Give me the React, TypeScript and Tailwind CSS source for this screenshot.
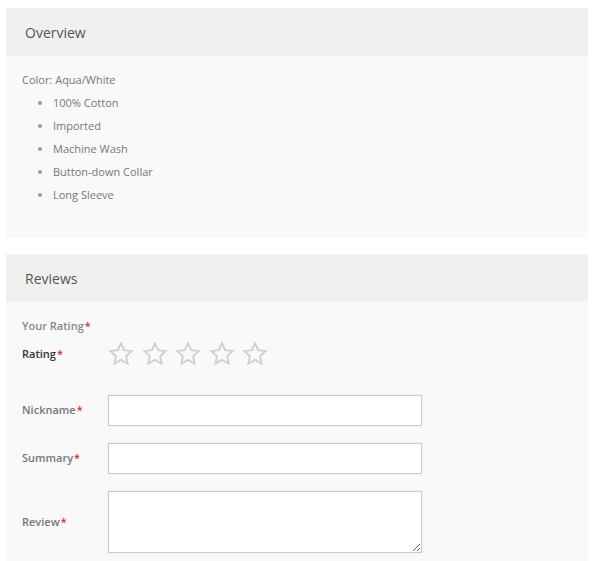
const font = { fontFamily: '"Open Sans", "Liberation Sans", sans-serif' };

function Star() {
  return (
    <svg viewBox="0 0 24 24" className="w-[26px] h-[26px]" fill="none">
      <path
        d="M12 2.2l2.95 6.3 6.85.8-5.05 4.7 1.35 6.8L12 17.4l-6.1 3.4 1.35-6.8L2.2 9.3l6.85-.8z"
        stroke="#cfcfcf"
        strokeWidth="1.7"
        strokeLinejoin="miter"
      />
    </svg>
  );
}

function Req() {
  return <span className="text-[#e02b27] ml-[1px]">*</span>;
}

export default function App() {
  const items = ['100% Cotton', 'Imported', 'Machine Wash', 'Button-down Collar', 'Long Sleeve'];

  return (
    <div className="bg-white min-h-screen pt-[8px] pl-[6px]" style={font}>
      <div className="w-[582px]">
        {/* Overview */}
        <div className="h-[48px] bg-[#f0f0ee] flex items-center pl-[19px] text-[14px] text-[#555]">
          Overview
        </div>
        <div className="h-[182px] bg-[#f9f9f9] pl-[16px] pt-[12px] text-[11px] leading-[23px] text-[#777]">
          <p>Color: Aqua/White</p>
          <ul className="list-disc pl-[31px] marker:text-[#999]">
            {items.map((it) => (
              <li key={it}>{it}</li>
            ))}
          </ul>
        </div>

        <div className="h-[16px]" />

        {/* Reviews */}
        <div className="h-[48px] bg-[#f0f0ee] flex items-center pl-[19px] text-[14px] text-[#555]">
          Reviews
        </div>
        <div className="bg-[#f9f9f9] pl-[16px] pt-[16px] pb-[8px] text-[11px] font-semibold">
          <div className="h-[16px] leading-[16px] text-[#888]">
            Your Rating<Req />
          </div>
          <div className="flex items-center h-[26px] mt-[7px]">
            <div className="w-[86px] text-[#333]">
              Rating<Req />
            </div>
            <div className="flex gap-[7.5px]">
              <Star />
              <Star />
              <Star />
              <Star />
              <Star />
            </div>
          </div>

          <div className="flex items-center mt-[28px]">
            <div className="w-[86px] text-[#777]">
              Nickname<Req />
            </div>
            <input className="w-[314px] h-[31px] bg-white border border-[#cccccc] shadow-[0_0_2px_rgba(0,0,0,0.08)] outline-none" />
          </div>
          <div className="flex items-center mt-[17px]">
            <div className="w-[86px] text-[#777]">
              Summary<Req />
            </div>
            <input className="w-[314px] h-[31px] bg-white border border-[#cccccc] shadow-[0_0_2px_rgba(0,0,0,0.08)] outline-none" />
          </div>
          <div className="flex items-center mt-[17px]">
            <div className="w-[86px] text-[#777]">
              Review<Req />
            </div>
            <textarea className="w-[314px] h-[62px] bg-white border border-[#cccccc] shadow-[0_0_2px_rgba(0,0,0,0.08)] outline-none block" />
          </div>
        </div>
      </div>
    </div>
  );
}
